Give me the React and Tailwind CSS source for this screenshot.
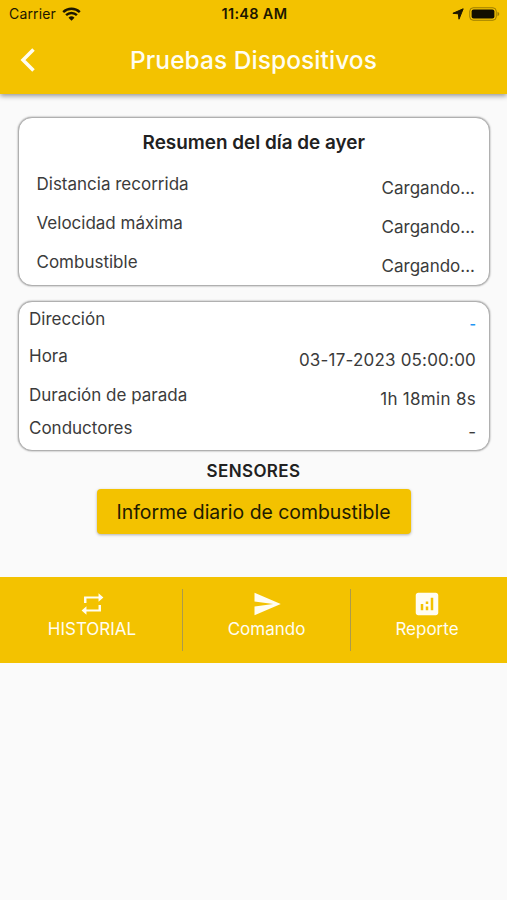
import { MdAnalytics, MdRepeat, MdSend } from 'react-icons/md'

const summary = [
  { label: 'Distancia recorrida', value: 'Cargando...' },
  { label: 'Velocidad máxima', value: 'Cargando...' },
  { label: 'Combustible', value: 'Cargando...' },
]

const details = [
  { label: 'Dirección', value: '-', row: 'h-[37px]', color: 'text-[#2196f3] text-[14px] font-semibold' },
  { label: 'Hora', value: '03-17-2023 05:00:00', row: 'h-[39px]', color: 'tracking-[0.2px]' },
  { label: 'Duración de parada', value: '1h 18min 8s', row: 'h-[33px]', color: 'tracking-[0.3px]' },
  { label: 'Conductores', value: '-', row: 'h-6', color: '' },
]

function StatusBar() {
  return (
    <div className="grid grid-cols-3 items-center h-7 pl-[9px] pr-[7px] text-sm text-[#1c1700]">
      <div className="flex items-center gap-[6px]">
        <span className="tracking-[0.15px]">Carrier</span>
        <svg width="19" height="14" viewBox="0 0 19 14" fill="none" stroke="currentColor" strokeWidth="2.4">
          <path d="M1.2 5.2a11.8 11.8 0 0 1 16.6 0" />
          <path d="M4.1 8.2a7.7 7.7 0 0 1 10.8 0" />
          <path d="M9.5 13.8 6.5 10.7a4.3 4.3 0 0 1 6 0z" fill="currentColor" stroke="none" />
        </svg>
      </div>
      <span className="text-center text-[14.5px] font-semibold tracking-[0.3px] whitespace-nowrap">11:48 AM</span>
      <div className="flex items-center justify-end gap-[5px]">
        <svg width="12" height="12" viewBox="0 0 12 12" fill="currentColor" stroke="currentColor" strokeWidth="1" strokeLinejoin="round">
          <path d="M11.2.8 7 11.200 6.300 5.800.900 5.300z" />
        </svg>
        <svg width="31" height="14" viewBox="0 0 31 14">
          <rect x="0.75" y="0.75" width="26.5" height="12.5" rx="3.5" fill="none" stroke="#1c1700" strokeOpacity="0.4" />
          <rect x="2.6" y="2.4" width="22.8" height="9.2" rx="2" fill="#120f00" />
          <path d="M28.5 4.7q1.8.8 1.8 2.3t-1.8 2.3z" fill="#1c1700" fillOpacity="0.4" />
        </svg>
      </div>
    </div>
  )
}

function Card({ children, className }) {
  return (
    <section className={`ml-[18px] mr-[17px] bg-white border border-[#b0b0b0] rounded-[14px] shadow-[0_0_2px_rgba(0,0,0,0.45)] ${className}`}>
      {children}
    </section>
  )
}

function Row({ label, value, row, color }) {
  return (
    <div className={`flex justify-between items-start leading-[25px] ${row}`}>
      <span>{label}</span>
      <span className={`pt-1 leading-[25px] ${color}`}>{value}</span>
    </div>
  )
}

export default function App() {
  return (
    <div className="h-[900px] w-full bg-[#fafafa] font-['Inter',sans-serif] text-[#3b3b3b] text-[17px] overflow-hidden">
      <header className="h-[94px] bg-[#f3c200] shadow-[0_2px_5px_rgba(0,0,0,0.4)]">
        <StatusBar />
        <div className="grid grid-cols-[60px_1fr_60px] items-center h-16 text-[#fffdf2]">
          <svg className="ml-5" width="16" height="26" viewBox="0 0 16 26" fill="none" stroke="currentColor" strokeWidth="3.5">
            <path d="M13.500 2.500 3 13l10.500 10.500" />
          </svg>
          <h1 className="text-center text-[24.5px] font-medium tracking-[0.05px] whitespace-nowrap">Pruebas Dispositivos</h1>
        </div>
      </header>

      <Card className="mt-[23px] h-[169px] pl-[17.5px] pr-[14px]">
        <h2 className="pt-[13px] pr-1 h-[54px] text-center text-[18.9px] leading-6 font-semibold text-[#212121]">Resumen del día de ayer</h2>
        {summary.map((item) => (
          <Row key={item.label} {...item} row="h-[39px]" color="" />
        ))}
      </Card>

      <Card className="mt-[15px] h-[150px] pt-[5px] pl-[10px] pr-[13px]">
        {details.map((item) => (
          <Row key={item.label} {...item} />
        ))}
      </Card>

      <div className="flex flex-col items-center">
        <h3 className="mt-2 leading-[25px] font-semibold tracking-[0.4px] text-[#212121]">SENSORES</h3>
        <button className="mt-[5px] w-[314px] h-[45px] pt-[2px] rounded bg-[#f3c200] text-[19.4px] text-[#211b00] whitespace-nowrap shadow-[0_1px_3px_rgba(0,0,0,0.3)]">
          Informe diario de combustible
        </button>
      </div>

      <nav className="mt-[43px] flex h-[86px] py-3 bg-[#f3c200] text-[#fffdf2] leading-[25px]">
        <div className="w-[183px] flex flex-col items-center border-r border-[#ab9a4c] pl-[2px]">
          <MdRepeat preserveAspectRatio="none" className="mt-[2px] w-[29px] h-[26px]" />
          <span>HISTORIAL</span>
        </div>
        <div className="w-[168px] flex flex-col items-center border-r border-[#ab9a4c]">
          <MdSend size={30} className="-mb-[2px]" />
          <span>Comando</span>
        </div>
        <div className="flex-1 flex flex-col items-center pr-1">
          <MdAnalytics size={30} className="-mb-[2px]" />
          <span>Reporte</span>
        </div>
      </nav>
    </div>
  )
}
